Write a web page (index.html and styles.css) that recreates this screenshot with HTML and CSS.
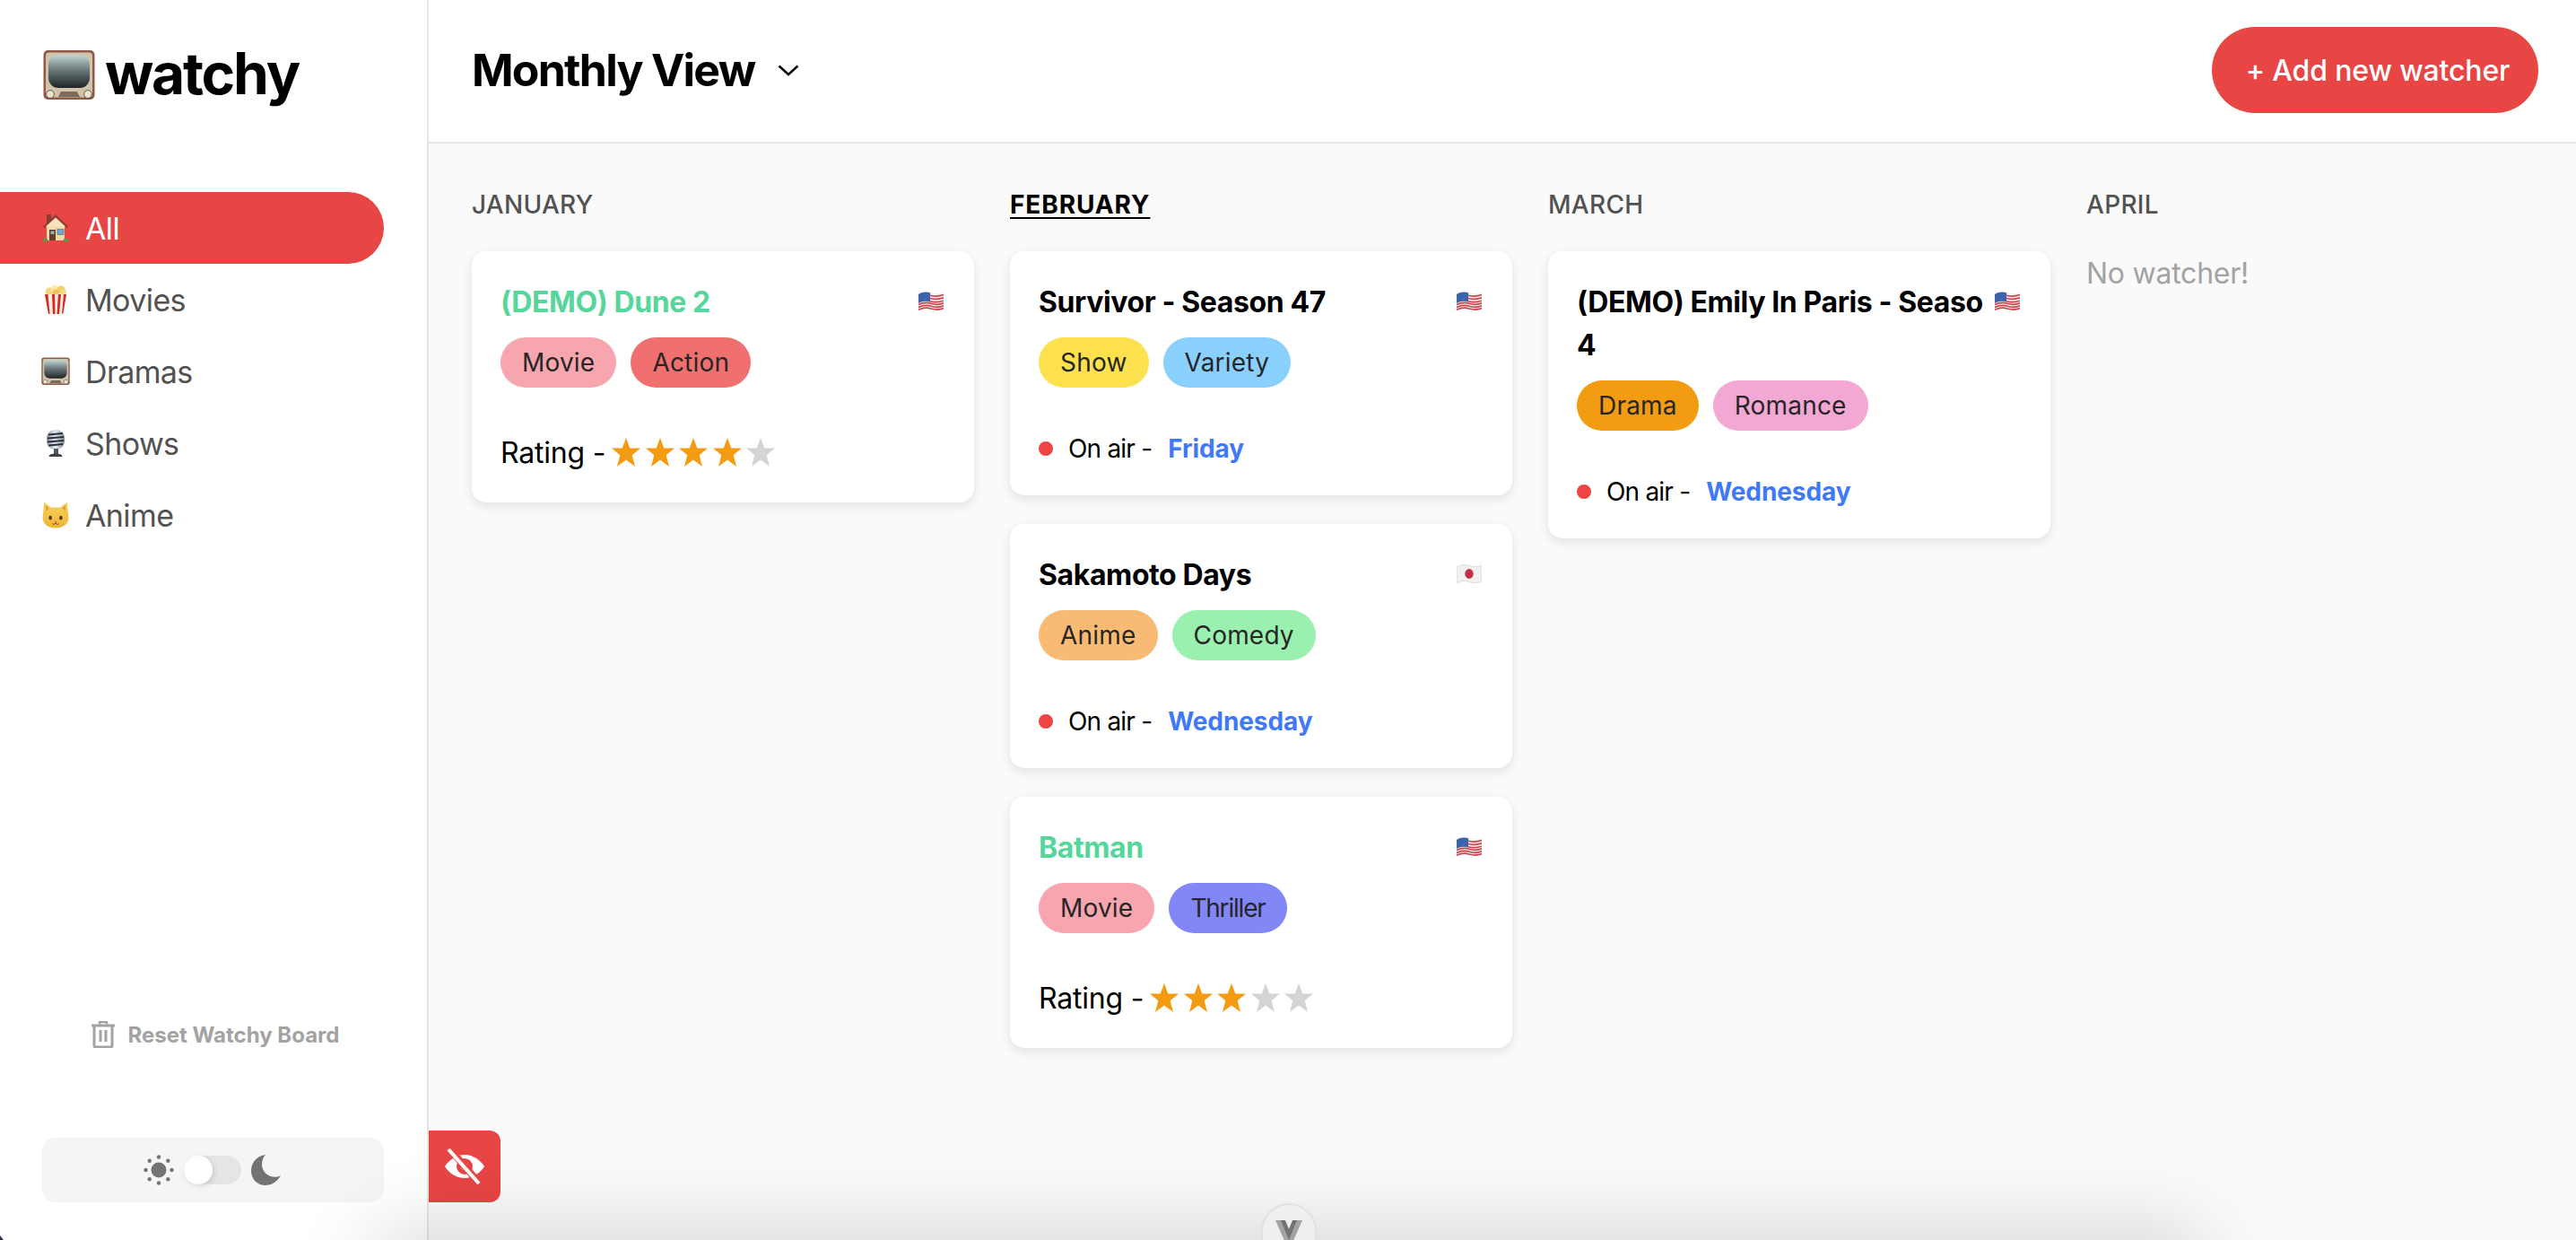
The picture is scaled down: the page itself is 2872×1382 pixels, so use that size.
FILE: index.html
```html
<!DOCTYPE html>
<html lang="en">
<head>
<meta charset="utf-8">
<title>watchy</title>
<link rel="stylesheet" href="styles.css">
</head>
<body>
<svg class="defs" aria-hidden="true">
  <defs>
    <linearGradient id="scr" x1="0" y1="0" x2="0" y2="1"><stop offset="0" stop-color="#c3d6d4"/><stop offset=".45" stop-color="#6c7a7c"/><stop offset="1" stop-color="#1f2426"/></linearGradient>
    <linearGradient id="silver" x1="0" y1="0" x2="1" y2="0"><stop offset="0" stop-color="#8a97a8"/><stop offset=".5" stop-color="#e4ebf3"/><stop offset="1" stop-color="#7d8794"/></linearGradient>
    <linearGradient id="catg" x1="0" y1="0" x2="0" y2="1"><stop offset="0" stop-color="#f6d35f"/><stop offset="1" stop-color="#eeb52f"/></linearGradient>
    <symbol id="tv" viewBox="0 0 58 58">
      <rect x="0.5" y="1" width="57" height="55" rx="5" fill="#8d5b48"/>
      <rect x="3" y="3.5" width="52" height="50" rx="3.5" fill="#d2c4ab"/>
      <rect x="6" y="6" width="46" height="37" rx="11" fill="url(#scr)"/>
      <circle cx="8" cy="50" r="4.4" fill="#e8e2cf" stroke="#6c5a49"/>
      <circle cx="50" cy="50" r="4.4" fill="#e8e2cf" stroke="#6c5a49"/>
      <path d="M17 53l3-6h18l3 6z" fill="#7b6b5c"/>
    </symbol>
    <symbol id="house" viewBox="0 0 30 32">
      <rect x="5" y="14" width="20" height="16" fill="#eed9a9"/>
      <rect x="5" y="1" width="5" height="9" fill="#8a3d30"/>
      <path d="M15 1 1 14.500l1.500 1.500L15 4.500 27.500 16l1.500-1.500z" fill="#8a3d30"/>
      <path d="M15 4.500 4 14.500h22z" fill="#f5e4b9"/>
      <rect x="8" y="18" width="7" height="12" fill="#6e3b25"/>
      <rect x="9.500" y="19.500" width="4" height="3.500" fill="#7cb3d8"/>
      <rect x="17" y="17.500" width="7" height="6" fill="#6fa6d8" stroke="#8a6f4a" stroke-width=".8"/>
      <ellipse cx="3.500" cy="29.500" rx="2.800" ry="2" fill="#5f9a3a"/>
      <ellipse cx="26.500" cy="29.500" rx="2.800" ry="2" fill="#5f9a3a"/>
    </symbol>
    <symbol id="popcorn" viewBox="0 0 26 32">
      <circle cx="6" cy="7" r="4.500" fill="#f3d77c"/><circle cx="12" cy="4.500" r="4.500" fill="#fbe79f"/><circle cx="19" cy="5" r="4.500" fill="#f3cf6b"/><circle cx="21.500" cy="8" r="3.500" fill="#f7dc8a"/><circle cx="13" cy="8" r="3.500" fill="#eec25a"/>
      <path d="M1 10h24l-3.500 20.500a1.500 1.500 0 0 1-1.500 1.500H6a1.500 1.500 0 0 1-1.500-1.500z" fill="#f6efe6"/>
      <path d="M1 10h3.500l2 22H5zM9 10h3l.5 22H10zM16 10h3l-2 22h-2.500zM22 10h3l-3.500 21-1.500 1z" fill="#d8281f"/>
    </symbol>
    <symbol id="mic" viewBox="0 0 24 32">
      <rect x="2" y="1" width="20" height="22" rx="9" fill="url(#silver)"/>
      <path d="M4 6.500l16-1.500M3 10.500l18-1.500M3 14.500l18-1.500M4 18.500l16-1.500" stroke="#2c3138" stroke-width="2.200"/>
      <rect x="10" y="22" width="5" height="6" fill="#50565e"/>
      <path d="M4.500 31c0-2.500 3.500-3.500 7.500-3.500s7.500 1 7.500 3.500z" fill="#3d4248"/>
    </symbol>
    <symbol id="cat" viewBox="0 0 28 30">
      <path d="M2 1.500 9 7h10l7-5.500 1.500 16c0 7-6 11-13.500 11S.5 24.500.5 17.500z" fill="url(#catg)"/>
      <path d="M3.500 4.500 7 8 4 11zM24.500 4.500 21 8l3 3z" fill="#e39b3c"/>
      <ellipse cx="8.500" cy="18" rx="1.600" ry="2.200" fill="#4a3520"/><ellipse cx="19.500" cy="18" rx="1.600" ry="2.200" fill="#4a3520"/>
      <path d="M12.500 21.500h3l-1.500 1.500z" fill="#c9614a"/>
      <path d="M10.800 24c1.500 1.300 2.700.6 3.200-.8.500 1.400 1.700 2.100 3.200.8" fill="none" stroke="#4a3520" stroke-width=".8"/>
    </symbol>
    <symbol id="us" viewBox="0 0 28 22">
      <path d="M0 3c5-3 9-3 14-1.500S24 3 28 1v18c-4 2-9 2-14 .5S5 18 0 21z" fill="#f4eeee"/>
      <g fill="none" stroke="#c9444b" stroke-width="1.700">
        <path d="M13 4.200c5 1.300 10 1.300 15-.6M13 7.500c5 1.300 10 1.300 15-.6M13 10.800c5 1.300 10 1.300 15-.6"/>
        <path d="M0 14.500c5-2.500 9-2.800 14-1.300s10 1.500 14-.4M0 17.500c5-2.500 9-2.800 14-1.300s10 1.500 14-.4M0 20.300c5-2.500 9-2.800 14-1.300s10 1.500 14-.4"/>
      </g>
      <path d="M0 3c4-2.600 8-3 13-1.800v10.300C8 10.200 4 10.700 0 13z" fill="#3e63ad"/>
    </symbol>
    <symbol id="jp" viewBox="0 0 28 22">
      <path d="M0 3c5-3 9-3 14-1.500S24 3 28 1v18c-4 2-9 2-14 .5S5 18 0 21z" fill="#f3f0ef" stroke="#cfcaca" stroke-width=".6"/>
      <ellipse cx="14" cy="10.500" rx="4.700" ry="5.400" fill="#c2304c"/>
    </symbol>
    <symbol id="star" viewBox="0 0 32 32">
      <path d="M16 0l4.300 11.600H32l-9.300 7.700L26 32l-10-7.600L6 32l3.300-12.700L0 11.600h11.700z"/>
    </symbol>
  </defs>
</svg>

<div class="app">
  <aside class="sidebar">
    <div class="logo">
      <svg class="logo-icon"><use href="#tv"/></svg>
      <span class="logo-text">watchy</span>
    </div>
    <nav class="nav">
      <a class="nav-item is-active"><svg class="nav-icon"><use href="#house"/></svg><span>All</span></a>
      <a class="nav-item"><svg class="nav-icon"><use href="#popcorn"/></svg><span>Movies</span></a>
      <a class="nav-item"><svg class="nav-icon"><use href="#tv"/></svg><span>Dramas</span></a>
      <a class="nav-item"><svg class="nav-icon"><use href="#mic"/></svg><span>Shows</span></a>
      <a class="nav-item"><svg class="nav-icon"><use href="#cat"/></svg><span>Anime</span></a>
    </nav>
    <div class="reset">
      <svg class="trash" viewBox="0 0 26 30" fill="none" stroke="#a3a3a3" stroke-width="3">
        <path d="M0 5h26"/><path d="M9 3.500V1h8v2.500" stroke-width="2.500"/>
        <path d="M3 5v22.500A1.500 1.500 0 0 0 4.500 29h17a1.500 1.500 0 0 0 1.500-1.500V5"/>
        <path d="M10 10v13M16 10v13"/>
      </svg>
      <span>Reset Watchy Board</span>
    </div>
    <div class="theme">
      <svg class="sun" viewBox="0 0 34 34" fill="#737373">
        <circle cx="17" cy="17" r="8.500"/>
        <circle cx="17" cy="2.500" r="2.200"/><circle cx="17" cy="31.500" r="2.200"/><circle cx="2.500" cy="17" r="2.200"/><circle cx="31.500" cy="17" r="2.200"/>
        <circle cx="6.700" cy="6.700" r="2.200"/><circle cx="27.300" cy="6.700" r="2.200"/><circle cx="6.700" cy="27.300" r="2.200"/><circle cx="27.300" cy="27.300" r="2.200"/>
      </svg>
      <span class="switch"><span class="knob"></span></span>
      <svg class="moon" viewBox="0 0 33 34" fill="#737373">
        <path d="M16 0C6.500 1.500 0 8.500 0 18c0 9 7 16 15.500 16 8 0 14-4.500 17.500-11 -1.500 1.200-3.500 1.800-6 1.800C18.500 24.800 12 18.500 12 11c0-4.500 1.300-8 4-11z"/>
      </svg>
    </div>
  </aside>

  <main class="main">
    <header class="topbar">
      <div class="view-select">
        <h1 class="view-title">Monthly View</h1>
        <svg class="chevron" viewBox="0 0 24 13" fill="none" stroke="#0a0a0a" stroke-width="2.600"><path d="M1.500 1.500 12 11 22.500 1.500"/></svg>
      </div>
      <button class="add-btn">+ Add new watcher</button>
    </header>

    <section class="board">
      <div class="column">
        <h2 class="month">JANUARY</h2>
        <article class="card">
          <div class="card-head"><h3 class="card-title is-done">(DEMO) Dune 2</h3><svg class="flag"><use href="#us"/></svg></div>
          <div class="tags"><span class="tag t-movie">Movie</span><span class="tag t-action">Action</span></div>
          <div class="rating">Rating -
            <span class="stars"><svg class="star on"><use href="#star"/></svg><svg class="star on"><use href="#star"/></svg><svg class="star on"><use href="#star"/></svg><svg class="star on"><use href="#star"/></svg><svg class="star"><use href="#star"/></svg></span>
          </div>
        </article>
      </div>

      <div class="column">
        <h2 class="month is-current">FEBRUARY</h2>
        <article class="card">
          <div class="card-head"><h3 class="card-title">Survivor - Season 47</h3><svg class="flag"><use href="#us"/></svg></div>
          <div class="tags"><span class="tag t-show">Show</span><span class="tag t-variety">Variety</span></div>
          <div class="onair"><i class="dot"></i><span>On air -</span><b class="day">Friday</b></div>
        </article>
        <article class="card">
          <div class="card-head"><h3 class="card-title">Sakamoto Days</h3><svg class="flag"><use href="#jp"/></svg></div>
          <div class="tags"><span class="tag t-anime">Anime</span><span class="tag t-comedy">Comedy</span></div>
          <div class="onair"><i class="dot"></i><span>On air -</span><b class="day">Wednesday</b></div>
        </article>
        <article class="card">
          <div class="card-head"><h3 class="card-title is-done">Batman</h3><svg class="flag"><use href="#us"/></svg></div>
          <div class="tags"><span class="tag t-movie">Movie</span><span class="tag t-thriller">Thriller</span></div>
          <div class="rating">Rating -
            <span class="stars"><svg class="star on"><use href="#star"/></svg><svg class="star on"><use href="#star"/></svg><svg class="star on"><use href="#star"/></svg><svg class="star"><use href="#star"/></svg><svg class="star"><use href="#star"/></svg></span>
          </div>
        </article>
      </div>

      <div class="column">
        <h2 class="month">MARCH</h2>
        <article class="card">
          <div class="card-head"><h3 class="card-title">(DEMO) Emily In Paris - Seaso<br>4</h3><svg class="flag"><use href="#us"/></svg></div>
          <div class="tags"><span class="tag t-drama">Drama</span><span class="tag t-romance">Romance</span></div>
          <div class="onair"><i class="dot"></i><span>On air -</span><b class="day">Wednesday</b></div>
        </article>
      </div>

      <div class="column">
        <h2 class="month">APRIL</h2>
        <p class="empty">No watcher!</p>
      </div>
    </section>

    <button class="eye-btn" aria-label="Hide">
      <svg viewBox="0 0 44 40" width="44" height="40">
        <path fill="#fff" fill-rule="evenodd" d="M22 7c10 0 18 6.500 22 13-4 6.500-12 13-22 13S4 26.500 0 20C4 13.500 12 7 22 7zm0 4a9 9 0 1 0 0 18 9 9 0 0 0 0-18zm0 5a4 4 0 1 1 0 8 4 4 0 0 1 0-8z"/>
        <path d="M5 0 38 38" stroke="#e84545" stroke-width="8"/>
        <path d="M4 1l34 38" stroke="#fff" stroke-width="4"/>
      </svg>
    </button>
  </main>
</div>

<div class="dock-shadow"></div>
<div class="dock-handle">
  <svg viewBox="0 0 30 24" width="30" height="24"><path d="M0 0h10l5 10 5-10h10L15 34z" fill="#a3a3a3"/><path d="M6 0h5l4 10 4-10h5L15 22z" fill="#737373"/></svg>
</div>
<div class="corner-tip"></div>
</body>
</html>
```
FILE: styles.css
```css
* { box-sizing: border-box; }
html, body { margin: 0; height: 100%; overflow: hidden; }
body { font-family: Inter, "Noto Sans", sans-serif; color: #000; background: #fff; position: relative; }
.defs { position: absolute; width: 0; height: 0; }

.app { display: flex; height: 100vh; }

/* sidebar */
.sidebar { width: 478px; flex: none; display: flex; flex-direction: column; border-right: 2px solid #e5e5e5; background: #fff; }
.logo { display: flex; align-items: center; gap: 11px; height: 72px; margin: 46px 0 0 48px; }
.logo-icon { width: 58px; height: 58px; margin-top: 4px; }
.logo-text { font-size: 64px; font-weight: 700; letter-spacing: -2.2px; line-height: 72px; }
.nav { margin-top: 96px; display: flex; flex-direction: column; }
.nav-item { display: flex; align-items: center; height: 80px; padding-left: 46px; width: 428px; font-size: 34px; color: #525252; border-radius: 0 40px 40px 0; letter-spacing: -.6px; }
.nav-item.is-active { background: #e84545; color: #fff; }
.nav-icon { width: 32px; height: 32px; margin-right: 17px; flex: none; }
.reset { margin-top: auto; display: flex; align-items: center; justify-content: center; gap: 15px; font-size: 24px; font-weight: 700; color: #a3a3a3; letter-spacing: 0; height: 32px; padding-left: 4px; }
.trash { width: 26px; height: 30px; }
.theme { margin: 99px 0 42px 46px; width: 382px; height: 72px; display: flex; align-items: center; padding-left: 114px; background: #f5f5f5; border-radius: 16px; }
.sun { width: 34px; height: 34px; margin-right: 11px; }
.switch { width: 64px; height: 32px; border-radius: 16px; background: #e5e5e5; display: block; }
.knob { display: block; width: 32px; height: 32px; border-radius: 50%; background: #fff; box-shadow: 2px 2px 6px rgba(0,0,0,.12); }
.moon { width: 33px; height: 34px; margin-left: 11px; }

/* main */
.main { flex: 1; min-width: 0; display: flex; flex-direction: column; background: #fafafa; position: relative; }
.topbar { height: 160px; flex: none; display: flex; align-items: center; justify-content: space-between; padding: 0 42px 2px 48px; background: #fff; border-bottom: 2px solid #e5e5e5; }
.view-select { display: flex; align-items: center; gap: 26px; }
.view-title { margin: 0; font-size: 50px; font-weight: 700; letter-spacing: -1.75px; line-height: 64px; }
.chevron { width: 24px; height: 13px; }
.add-btn { height: 96px; width: 364px; border: 0; border-radius: 48px; background: #e84545; color: #fff; font: 500 32px Inter, sans-serif; letter-spacing: -.15px; padding: 0 0 0 6px; }

.board { display: grid; grid-template-columns: repeat(4, 560px); column-gap: 40px; padding: 48px 48px 0; align-items: start; }
.column { display: flex; flex-direction: column; gap: 32px; }
.month { margin: 0; height: 40px; font-size: 28px; line-height: 40px; font-weight: 500; color: #525252; letter-spacing: .3px; }
.month.is-current { color: #000; font-weight: 700; text-decoration: underline; text-underline-offset: 4px; letter-spacing: .9px; }
.empty { margin: 3px 0 0; font-size: 32px; line-height: 44px; color: #a3a3a3; letter-spacing: -.25px; }

.card { background: #fff; border-radius: 16px; padding: 32px; box-shadow: 0 4px 12px rgba(0,0,0,.1); }
.card-head { display: flex; justify-content: space-between; align-items: flex-start; }
.card-title { margin: 0; padding-top: 1px; font-size: 32px; line-height: 48px; font-weight: 700; letter-spacing: -.4px; }
.card-title.is-done { color: #55d69a; }
.flag { width: 28px; height: 22px; margin: 13px 2px 0 0; flex: none; }
.tags { display: flex; gap: 16px; margin-top: 15px; }
.tag { height: 56px; line-height: 56px; padding: 0 24px; border-radius: 28px; font-size: 28px; color: #262626; letter-spacing: .2px; }
.t-movie { background: #f7a5ae; }
.t-action { background: #f07070; }
.t-show { background: #fde14f; }
.t-variety { background: #8ad0ff; }
.t-anime { background: #f9bb74; }
.t-comedy { background: #9af0ae; }
.t-thriller { background: #8287f7; letter-spacing: -1.2px; }
.t-drama { background: #f39c12; }
.t-romance { background: #f3a8d4; }

.rating { display: flex; align-items: center; gap: 7px; height: 48px; margin-top: 48px; font-size: 32px; letter-spacing: -.2px; }
.stars { display: flex; gap: 5.500px; }
.star { width: 32px; height: 32px; fill: #d4d4d4; }
.star.on { fill: #f39c12; }
.onair { display: flex; align-items: center; height: 40px; margin-top: 48px; font-size: 28px; letter-spacing: -.8px; }
.dot { width: 16px; height: 16px; border-radius: 50%; background: #ef4444; margin-right: 17px; flex: none; }
.day { margin-left: 18px; font-weight: 700; color: #4079f5; letter-spacing: -.1px; }

.eye-btn { position: absolute; left: 0; bottom: 42px; width: 80px; height: 80px; border: 0; padding: 0; border-radius: 0 12px 12px 0; background: #e84545; display: flex; align-items: center; justify-content: center; }

/* pull-up dock hanging below the window */
.dock-shadow { position: absolute; left: 420px; right: 420px; top: 100%; height: 60px; border-radius: 60px; box-shadow: 0 0 90px 10px rgba(0,0,0,.16); z-index: 2; }
.dock-handle { position: absolute; left: 1406px; top: 1341px; width: 62px; height: 80px; border-radius: 31px; background: #efefef; border: 2px solid #e2e2e2; z-index: 3; display: flex; justify-content: center; padding-top: 17px; }
.corner-tip { position: absolute; left: 0; bottom: 0; width: 4px; height: 5px; background: #2a3142; clip-path: polygon(0 0, 100% 100%, 0 100%); z-index: 3; }
```
